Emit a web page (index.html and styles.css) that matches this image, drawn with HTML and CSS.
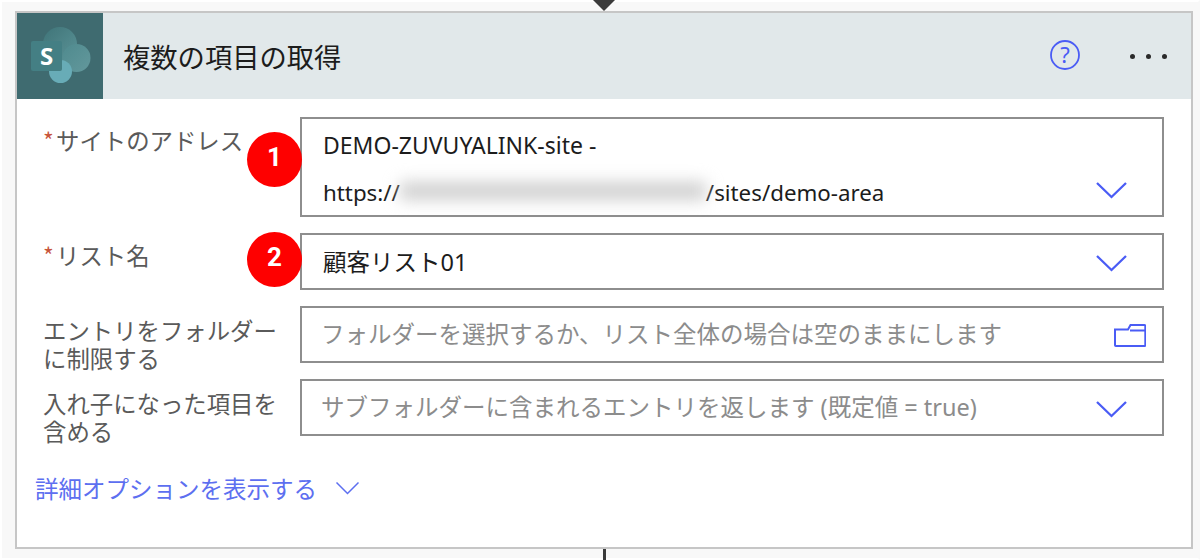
FILE: index.html
```html
<!DOCTYPE html>
<html lang="ja">
<head>
<meta charset="utf-8">
<title>複数の項目の取得</title>
<link rel="stylesheet" href="styles.css">
</head>
<body>
<div class="page">
  <div class="conn-top"><svg class="conn-arrow" width="26" height="12" viewBox="0 0 26 12"><path d="M2 0h22L13 11z" fill="#3a3a3a"/></svg></div>
  <section class="card">
    <header class="head">
      <div class="logo">
        <svg width="86" height="86" viewBox="0 0 86 86">
          <defs>
            <linearGradient id="a" x1="0" y1="0" x2="1" y2="1"><stop offset="0" stop-color="#3f7478"/><stop offset="1" stop-color="#5b9397"/></linearGradient>
            <linearGradient id="b" x1="0" y1="0" x2="1" y2="1"><stop offset="0" stop-color="#4f8a8e"/><stop offset="1" stop-color="#63989c"/></linearGradient>
          </defs>
          <circle cx="43" cy="31" r="17" fill="url(#a)"/>
          <circle cx="59.500" cy="45" r="14" fill="url(#b)"/>
          <circle cx="43.500" cy="58.500" r="11.500" fill="#68acb7"/>
          <rect x="14" y="28" width="31" height="30" rx="2" fill="#447f84"/>
          <text class="logo-s" x="29.500" y="51.500" text-anchor="middle">S</text>
        </svg>
      </div>
      <h1 class="title">複数の項目の取得</h1>
      <svg class="help" width="30" height="30" viewBox="0 0 30 30">
        <circle cx="15" cy="15" r="14" fill="none" stroke="#4a5cf5" stroke-width="1.800"/>
        <text class="help-q" x="15" y="22.500" text-anchor="middle">?</text>
      </svg>
      <div class="dots"><i></i><i></i><i></i></div>
    </header>
    <div class="form">
      <div class="row">
        <label class="label label-first"><span class="req">*</span>サイトのアドレス</label>
        <div class="field field-tall">
          <div class="badge">1</div>
          <div class="tall-text">
            <div class="site">DEMO-ZUVUYALINK-site -</div>
            <div class="url">https://<span class="blur"></span>/sites/demo-area</div>
          </div>
          <svg class="chev chev-low" width="32" height="18" viewBox="0 0 32 18"><path d="M2 2l14.500 14L31 2" fill="none" stroke="#4a5cf5" stroke-width="2.300"/></svg>
        </div>
      </div>
      <div class="row">
        <label class="label"><span class="req">*</span>リスト名</label>
        <div class="field">
          <div class="badge">2</div>
          <span class="value">顧客リスト01</span>
          <svg class="chev" width="32" height="18" viewBox="0 0 32 18"><path d="M2 2l14.500 14L31 2" fill="none" stroke="#4a5cf5" stroke-width="2.300"/></svg>
        </div>
      </div>
      <div class="row row-short">
        <label class="label label-two">エントリをフォルダーに制限する</label>
        <div class="field">
          <span class="value ph">フォルダーを選択するか、リスト全体の場合は空のままにします</span>
          <svg class="folder" width="32" height="24" viewBox="0 0 32 24"><path d="M1 6.500h13l2.500-4.500h14a.8.8 0 0 1 .8.8v19.400a.8.8 0 0 1-.8.8H1.800a.8.8 0 0 1-.8-.8zM16 7.500h15" fill="none" stroke="#4a5cf5" stroke-width="2"/></svg>
        </div>
      </div>
      <div class="row row-short">
        <label class="label label-two">入れ子になった項目を含める</label>
        <div class="field">
          <span class="value ph">サブフォルダーに含まれるエントリを返します (既定値 = true)</span>
          <svg class="chev" width="32" height="18" viewBox="0 0 32 18"><path d="M2 2l14.500 14L31 2" fill="none" stroke="#4a5cf5" stroke-width="2.300"/></svg>
        </div>
      </div>
      <div class="more">
        <span>詳細オプションを表示する</span>
        <svg width="25" height="14" viewBox="0 0 25 14"><path d="M1.500 1.500l11 11 11-11" fill="none" stroke="#5d6ff0" stroke-width="1.500"/></svg>
      </div>
    </div>
  </section>
  <div class="conn-bottom"></div>
</div>
</body>
</html>
```

FILE: styles.css
```css
* { box-sizing: border-box; }
html, body { margin: 0; padding: 0; }
body {
  width: 1200px;
  height: 560px;
  overflow: hidden;
  background: #f8f8f8;
  font-family: "Noto Sans", "Noto Sans CJK JP", sans-serif;
}
.page {
  height: 560px;
  display: flex;
  flex-direction: column;
  border: 2px solid #fff;
  border-right-color: #f8f8f8;
}
.conn-top {
  height: 9px;
  padding-left: 589px;
  display: flex;
  align-items: flex-start;
  position: relative;
  z-index: 1;
}
.conn-arrow { display: block; margin-top: -2px; flex: none; }
.card {
  width: 1178px;
  height: 538px;
  margin-left: 13px;
  background: #fff;
  border: 2px solid #c6c6c6;
  flex: none;
}
.head {
  height: 86px;
  background: #e1e8ea;
  display: flex;
  align-items: center;
}
.logo { width: 86px; height: 86px; background: #3f6b70; flex: none; }
.logo svg { display: block; }
.logo-s {
  font-family: "Noto Sans", sans-serif;
  font-weight: 700;
  font-size: 24px;
  fill: #fff;
}
.title {
  margin: 0 0 0 20px;
  flex: 1;
  font-size: 27.3px;
  line-height: 36px;
  font-weight: 400;
  color: #1c1c1c;
  font-family: "Noto Sans CJK JP", sans-serif;
}
.help { flex: none; margin: -2px 50px 0 0; }
.help-q { font-family: "Noto Sans", sans-serif; font-size: 22px; fill: #4a5cf5; }
.dots { display: flex; gap: 11px; margin-right: 24px; flex: none; }
.dots i { width: 5px; height: 5px; border-radius: 50%; background: #2a2a2a; display: block; }
.form {
  padding: 18px 27px 0 26px;
  display: flex;
  flex-direction: column;
  gap: 16px;
}
.row { display: flex; align-items: flex-start; }
.row-short { height: 57px; }
.label {
  width: 257px;
  flex: none;
  font-size: 23.4px;
  line-height: 27px;
  color: #5a5a5a;
  font-family: "Noto Sans CJK JP", sans-serif;
  padding-top: 9px;
}
.label-first { padding-top: 10px; }
.label-two { padding: 0 19px 0 0; margin-top: 10px; line-height: 28px; }
.req { color: #c8553a; display: inline-block; width: 13px; font-size: 23px; }
.field {
  position: relative;
  width: 864px;
  height: 57px;
  border: 2px solid #8e8e8e;
  display: flex;
  align-items: center;
  padding-left: 21px;
  background: #fff;
}
.field-tall { height: 100px; align-items: flex-start; padding-top: 2px; }
.tall-text {
  line-height: 48px;
  color: #1c1c1c;
  white-space: nowrap;
}
.site { font-size: 23px; }
.url { font-size: 22.3px; display: flex; align-items: center; }
.blur {
  display: block;
  width: 306px;
  height: 18px;
  background: #cfcfcf;
  filter: blur(8px);
  margin: 0 0 4px 0;
}
.value {
  font-size: 23.5px;
  line-height: 30px;
  color: #1c1c1c;
  flex: 1;
  white-space: nowrap;
  font-family: "Noto Sans", "Noto Sans CJK JP", sans-serif;
}
.ph { color: #8c8c8c; margin: -2px 0 0 -2px; }
.chev { flex: none; margin: 2px 35px 0 0; }
.chev-low { position: absolute; right: 0; bottom: 16px; margin: 0 35px 0 0; }
.folder { flex: none; margin-right: 16px; }
.badge {
  position: absolute;
  left: -55px;
  top: 13px;
  width: 55px;
  height: 55px;
  border-radius: 50%;
  background: #fe0000;
  color: #fff;
  font-size: 26px;
  font-weight: 700;
  text-align: center;
  line-height: 50px;
  font-family: "Liberation Sans Narrow", "Roboto", sans-serif;
}
.field:not(.field-tall) .badge { top: -3px; }
.more {
  margin-top: 20px;
  margin-left: -8px;
  display: flex;
  align-items: center;
  gap: 18px;
  font-size: 23.5px;
  line-height: 32px;
  color: #5d6ff0;
  font-family: "Noto Sans CJK JP", sans-serif;
}
.conn-bottom {
  width: 3px;
  height: 11px;
  margin-left: 601px;
  background: #3a3a3a;
  flex: none;
}
```
